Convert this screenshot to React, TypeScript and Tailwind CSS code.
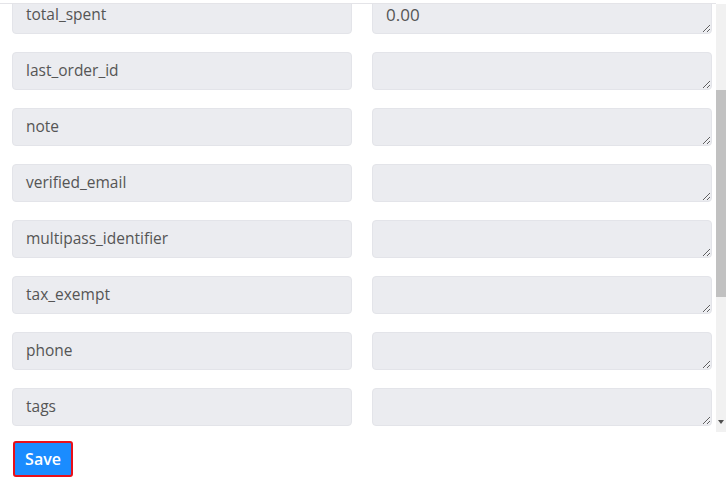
const FIELDS: { name: string; value: string }[] = [
  { name: 'total_spent', value: '0.00' },
  { name: 'last_order_id', value: '' },
  { name: 'note', value: '' },
  { name: 'verified_email', value: '' },
  { name: 'multipass_identifier', value: '' },
  { name: 'tax_exempt', value: '' },
  { name: 'phone', value: '' },
  { name: 'tags', value: '' },
];

export default function App() {
  return (
    <div
      className="flex h-[500px] w-[726px] overflow-hidden bg-white text-[#555]"
      style={{ fontFamily: '"Open Sans", "Liberation Sans", sans-serif' }}
    >
      <div className="relative w-[716px] overflow-hidden">
        {/* sticky header edge */}
        <div className="absolute inset-x-0 top-0 z-10 h-[4px] border-b border-[#e4e4e8] bg-white" />

        <div className="-mt-[4px] flex flex-col gap-[18px] pl-[12px] pr-[4px]">
          {FIELDS.map((f) => (
            <div key={f.name} className="flex gap-[20px]">
              <div className="flex h-[38px] w-[340px] items-center rounded-[4px] border border-[#e3e4e9] bg-[#ebecf0] px-[13px] pb-[1px] text-[15.5px]">
                {f.name}
              </div>
              <textarea
                defaultValue={f.value}
                className="h-[38px] w-[340px] resize-y rounded-[4px] border border-[#e3e4e9] bg-[#ebecf0] px-[13px] pt-[6px] text-[17px] leading-[24px] text-[#555] outline-none"
              />
            </div>
          ))}
        </div>

        <div className="pl-[13px] pt-[15px]">
          <button className="flex h-[36px] w-[60px] items-center justify-center rounded-[3px] border-2 border-[#e8101a] bg-[#1a8cff] pb-[1px] text-[16px] font-semibold text-white">
            Save
          </button>
        </div>
      </div>

      {/* scrollbar */}
      <div className="mt-[4px] flex h-[428px] w-[10px] flex-col bg-[#f1f1f1]">
        <div className="h-[86px]" />
        <div className="h-[207px] bg-[#c1c1c1]" />
        <div className="flex-1" />
        <div className="flex h-[12px] items-start justify-center">
          <svg width="6" height="4" viewBox="0 0 6 4">
            <path d="M0 0 H6 L3 4 Z" fill="#505050" />
          </svg>
        </div>
      </div>
    </div>
  );
}
